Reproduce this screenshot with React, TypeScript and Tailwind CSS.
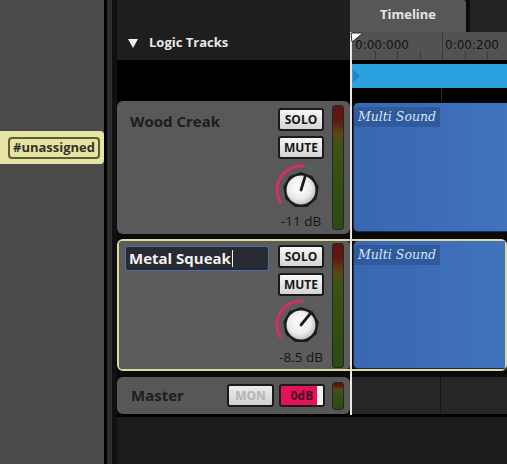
import React from 'react';

const ui = "font-['Open_Sans','DejaVu_Sans',sans-serif]";

type Pt = [number, number];

// knob centre is (27,27); arc radius 24, body radius ~18
const Knob: React.FC<{ tip: Pt; arcEnd: Pt; tealEnd: Pt }> = ({ tip, arcEnd, tealEnd }) => (
    <svg width="54" height="48" viewBox="0 0 54 48">
        <defs>
            <radialGradient id="kn" cx="45%" cy="42%" r="60%">
                <stop offset="0%" stopColor="#ffffff" />
                <stop offset="65%" stopColor="#ececec" />
                <stop offset="100%" stopColor="#bcbcbc" />
            </radialGradient>
        </defs>
        <path d={`M6.87 40.07 A24 24 0 0 1 ${arcEnd[0]} ${arcEnd[1]}`} fill="none" stroke="#d42f5e" strokeWidth="3" />
        <path d={`M${arcEnd[0]} ${arcEnd[1]} A24 24 0 0 1 ${tealEnd[0]} ${tealEnd[1]}`} fill="none" stroke="#3d6d68" strokeWidth="3" />
        <polygon
            points="27,9 38.57,13.21 44.73,23.87 42.59,36 33.16,43.91 20.84,43.91 11.41,36 9.27,23.87 15.43,13.21"
            fill="#1c1c1c"
        />
        <circle cx="27" cy="27" r="16.5" fill="#1c1c1c" />
        <circle cx="27" cy="27" r="14.5" fill="url(#kn)" />
        <line x1="27" y1="27" x2={tip[0]} y2={tip[1]} stroke="#1c1c1c" strokeWidth="2.8" strokeLinecap="round" />
    </svg>
);

const Meter: React.FC<{ className?: string }> = ({ className }) => (
    <div
        className={`w-[12px] rounded-[3px] border border-[#262626] bg-[linear-gradient(to_bottom,#5e1414_0%,#5c1a14_12%,#5a4614_22%,#3d5216_32%,#2c4a12_100%)] ${className ?? ''}`}
    />
);

const Btn: React.FC<{ label: string }> = ({ label }) => (
    <div className="w-[46px] h-[23px] rounded-[3px] border-2 border-[#1a1a1a] bg-[linear-gradient(#f7f7f7,#d4d4d4)] flex items-center justify-center text-[12px] font-bold text-[#161616] leading-none">
        {label}
    </div>
);

const Clip: React.FC = () => (
    <div className="h-full rounded-l-[5px] border-l border-b border-[#1c2c52] bg-[linear-gradient(to_right,#3a67b1,#4072be)]">
        <div className="inline-block bg-[#2f5a9c] px-[4px] pt-[1px] h-[20px] rounded-tl-[4px] font-['DejaVu_Serif',serif] italic text-[12.5px] text-[#dce4f2]">
            Multi Sound
        </div>
    </div>
);

export default function App() {
    return (
        <div className={`w-[507px] h-[464px] flex bg-[#1b1b1b] overflow-hidden ${ui}`}>
            {/* left tag panel */}
            <div className="w-[104px] bg-[#4b4b4b] flex flex-col">
                <div className="mt-[131px] h-[33px] bg-[#e6e4a5] rounded-r-[4px] flex items-center pl-[8px]">
                    <div className="h-[22px] border-2 border-[#5e5e34] rounded-[4px] px-[3px] flex items-center text-[13px] font-bold text-[#333326]">
                        #unassigned
                    </div>
                </div>
            </div>
            <div className="w-[3px] bg-black" />
            <div className="w-[5px] bg-[#2e2e2e]" />
            <div className="w-[5px] bg-[#101010]" />

            {/* main */}
            <div className="flex-1 flex flex-col relative">
                {/* header */}
                <div className="flex h-[60px] bg-[#1e1e1e]">
                    <div className="w-[233px] flex items-center pt-[26px] pl-[11px] gap-[11px]">
                        <svg width="10" height="9" viewBox="0 0 10 9">
                            <polygon points="0,0 10,0 5,9" fill="#f0f0f0" />
                        </svg>
                        <span className="text-[13px] font-bold text-[#e8e8e8]">Logic Tracks</span>
                    </div>
                    <div className="flex-1 flex flex-col">
                        <div className="h-[32px] flex">
                            <div className="w-[116px] bg-[#575757] rounded-tr-[3px] flex items-center justify-center pb-[2px] text-[13px] font-bold text-[#e4e4e4]">
                                Timeline
                            </div>
                            <div className="w-[4px] bg-[#0c0c0c]" />
                            <div className="flex-1 bg-[#232323]" />
                        </div>
                        <div className="h-[28px] bg-[#525252] relative flex items-start pt-[4px] font-['DejaVu_Sans',sans-serif] text-[12px] text-[#121212]">
                            <svg className="absolute inset-0" width="157" height="28">
                                {[25, 47, 70, 115, 137].map(x => (
                                    <line key={x} x1={x + 0.5} y1="19" x2={x + 0.5} y2="28" stroke="#3c3c3c" strokeWidth="1" />
                                ))}
                                <line x1="92.5" y1="0" x2="92.5" y2="28" stroke="#383838" strokeWidth="1" />
                            </svg>
                            <span className="relative w-[95px] pl-[5px]">0:00:000</span>
                            <span className="relative">0:00:200</span>
                        </div>
                    </div>
                </div>

                {/* range band */}
                <div className="flex h-[41px] bg-black">
                    <div className="w-[233px]" />
                    <div className="flex-1 pt-[4px] flex flex-col">
                        <div className="h-[24px] bg-[#2aa2df] flex items-center pl-[3px]">
                            <svg width="7" height="12" viewBox="0 0 7 12">
                                <polygon points="0,0 7,6 0,12" fill="#1f86be" />
                            </svg>
                        </div>
                        <div className="flex-1 flex">
                            <div className="w-[92px] border-r border-[#2a2a2a]" />
                        </div>
                    </div>
                </div>

                {/* tracks */}
                <div className="flex flex-col bg-[#0a0a0a]">
                    {/* Wood Creak */}
                    <div className="flex h-[133px]">
                        <div className="w-[233px] bg-[#595959] rounded-[6px] flex pr-[6px]">
                            <div className="flex-1 pl-[13px] pt-[9px] text-[15px] font-bold text-[#1d1d1d]">Wood Creak</div>
                            <div className="w-[46px] flex flex-col items-center pt-[7px]">
                                <Btn label="SOLO" />
                                <div className="h-[5px]" />
                                <Btn label="MUTE" />
                                <div className="mt-[4px] w-[54px] h-[48px]">
                                    <Knob tip={[31.39, 12.66]} arcEnd={[30.75, 3.3]} tealEnd={[39.36, 6.43]} />
                                </div>
                                <div className="mt-[2px] text-[13.5px] text-[#161616] leading-[16px] whitespace-nowrap">-11 dB</div>
                            </div>
                            <Meter className="ml-[8px] my-[4px]" />
                        </div>
                        <div className="flex-1 pl-[3px] py-[2px]">
                            <Clip />
                        </div>
                    </div>

                    <div className="h-[5px]" />

                    {/* Metal Squeak (selected) */}
                    <div className="flex h-[132px] border-2 border-[#dcdb9c] rounded-[6px]">
                        <div className="w-[231px] bg-[#5c5c5c] rounded-[4px] flex pr-[6px]">
                            <div className="flex-1 pl-[6px] pt-[5px]">
                                <div className="w-[144px] h-[25px] bg-[#272a31] border border-[#4b6fa8] rounded-[3px] flex items-center pl-[3px] text-[15px] font-bold text-[#f2f2f2]">
                                    Metal Squeak
                                    <span className="w-[1px] h-[17px] bg-[#f2f2f2] ml-[1px]" />
                                </div>
                            </div>
                            <div className="w-[46px] flex flex-col items-center pt-[4px]">
                                <Btn label="SOLO" />
                                <div className="h-[5px]" />
                                <Btn label="MUTE" />
                                <div className="mt-[2px] w-[54px] h-[48px]">
                                    <Knob tip={[36.44, 15.34]} arcEnd={[29.09, 3.09]} tealEnd={[32.81, 3.71]} />
                                </div>
                                <div className="mt-[3px] text-[13.5px] text-[#161616] leading-[16px] whitespace-nowrap">-8.5 dB</div>
                            </div>
                            <Meter className="ml-[8px] mt-[2px] mb-[1px]" />
                        </div>
                        <div className="flex-1 pl-[3px]">
                            <Clip />
                        </div>
                    </div>

                    <div className="h-[6px]" />

                    {/* Master */}
                    <div className="flex h-[37px]">
                        <div className="w-[233px] bg-[#575757] rounded-[6px] flex items-center pl-[14px] pr-[6px]">
                            <div className="flex-1 text-[15px] font-bold text-[#1d1d1d]">Master</div>
                            <div className="w-[47px] h-[23px] rounded-[3px] border-2 border-[#1a1a1a] bg-[linear-gradient(#ececec,#d2d2d2)] flex items-center justify-center text-[12px] font-bold text-[#b4b4b4]">
                                MON
                            </div>
                            <div className="ml-[5px] w-[46px] h-[23px] rounded-[3px] border-2 border-[#1a1a1a] bg-[linear-gradient(to_right,#e3135a_85%,#f2f2f2_85%)] flex items-center justify-center text-[12px] font-bold text-[#4a0c1e]">
                                0dB
                            </div>
                            <Meter className="ml-[7px] h-[28px]" />
                        </div>
                        <div className="flex-1 bg-[#262626] flex">
                            <div className="w-[91px] border-r border-[#171717]" />
                        </div>
                    </div>
                    <div className="h-[3px] bg-black" />
                </div>
                <div className="flex-1 bg-[#1c1c1c]" />

                {/* playhead */}
                <div className="absolute left-[233px] top-[32px] w-[2px] h-[383px] bg-[#e8e8e8]" />
                <svg className="absolute left-[233px] top-[32px]" width="14" height="11" viewBox="0 0 14 11">
                    <polygon points="1,1 13,1 2,10" fill="#ffffff" stroke="#2a2a2a" strokeWidth="1" />
                </svg>
            </div>
        </div>
    );
}
